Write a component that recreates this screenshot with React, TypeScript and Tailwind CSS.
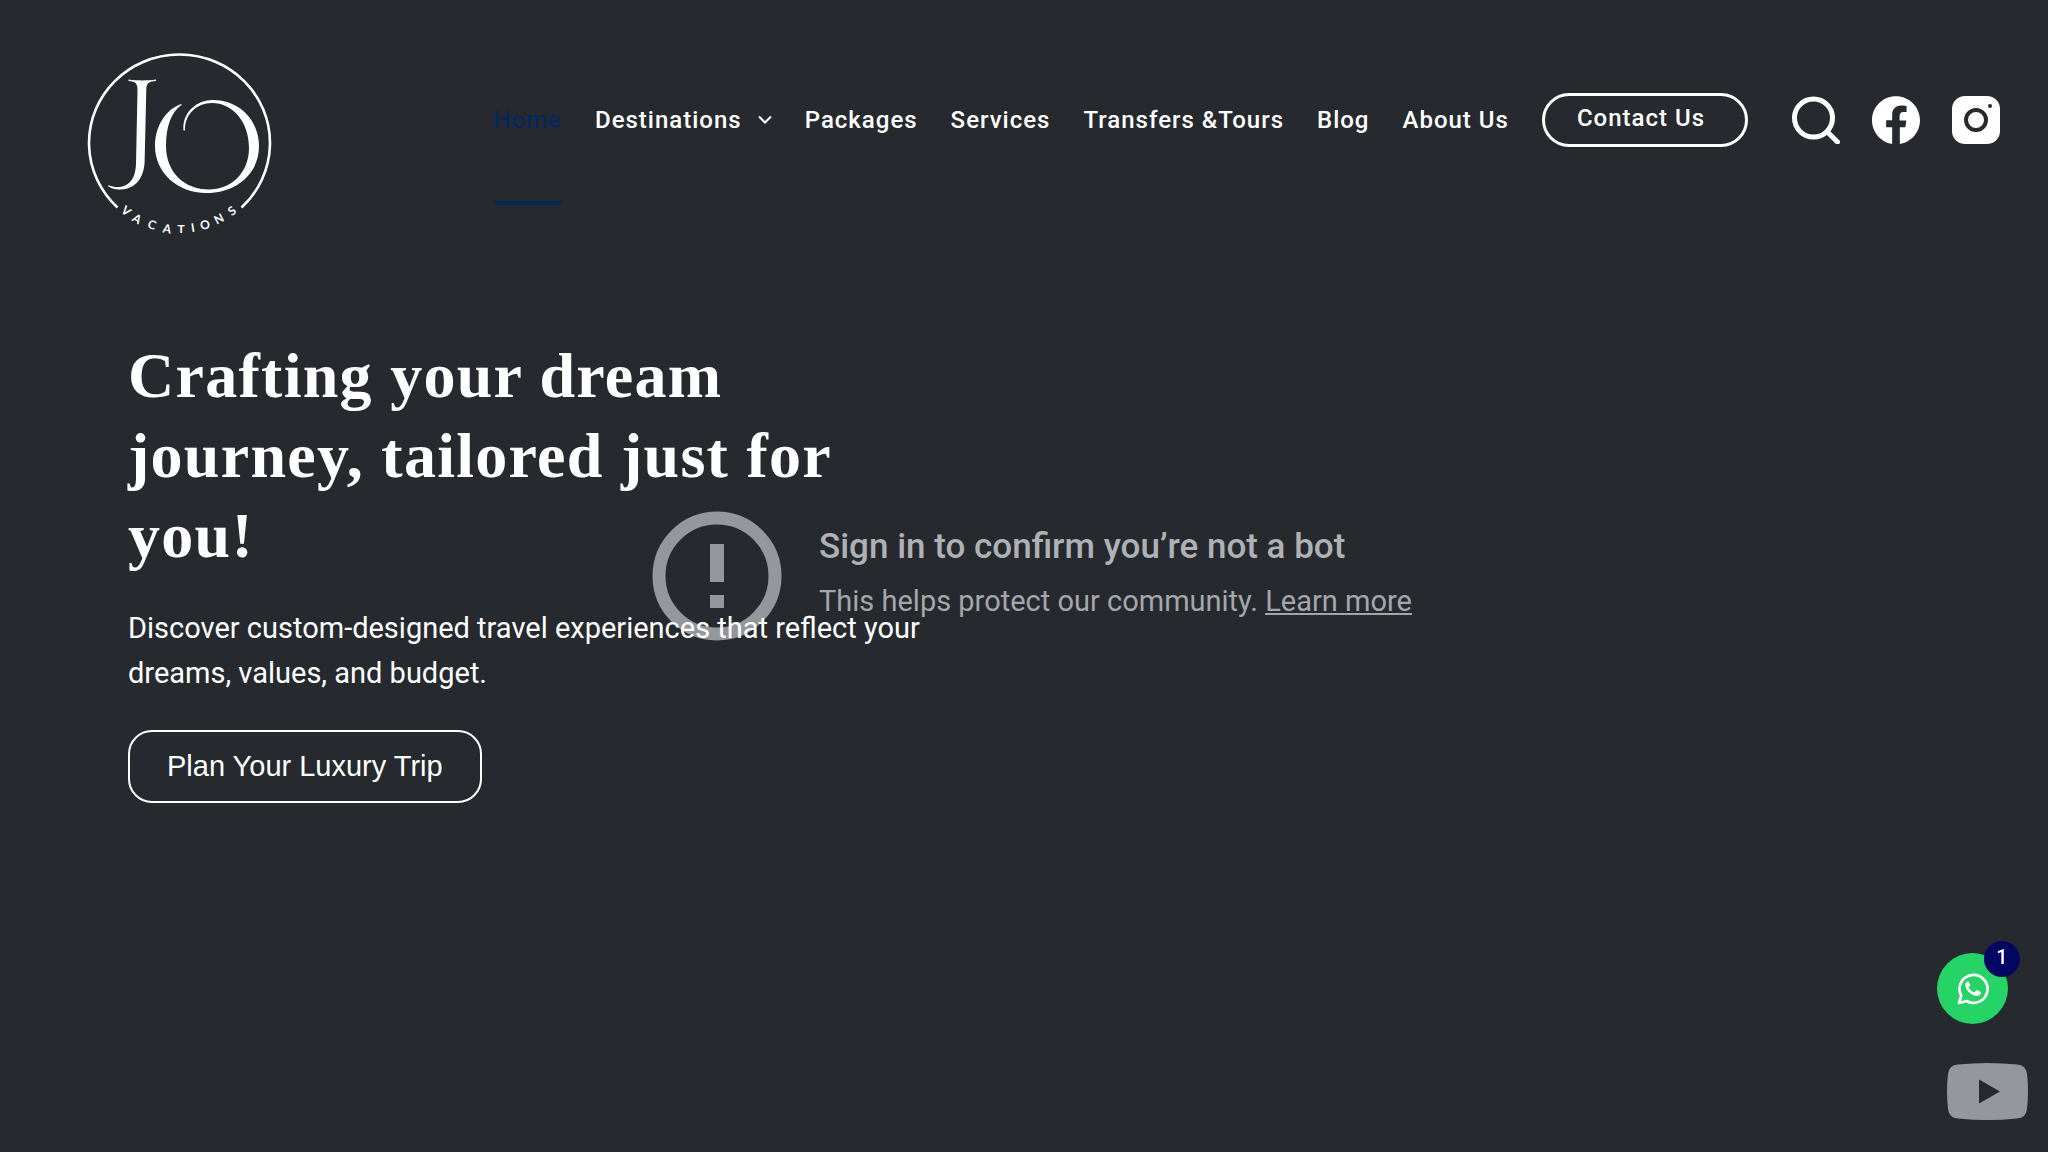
import React from 'react';

const navLinks = [
  { label: 'Home', active: true },
  { label: 'Destinations', menu: true },
  { label: 'Packages' },
  { label: 'Services' },
  { label: 'Transfers &Tours' },
  { label: 'Blog' },
  { label: 'About Us' },
];

// Position and rotation of each letter under the logo ring
const vacations = [
  { char: 'V', x: 56, y: 171, r: 40 },
  { char: 'A', x: 67, y: 179, r: 31 },
  { char: 'C', x: 82, y: 185, r: 21 },
  { char: 'A', x: 97, y: 189, r: 10 },
  { char: 'T', x: 111, y: 189, r: 0 },
  { char: 'I', x: 123, y: 188, r: -9 },
  { char: 'O', x: 135, y: 185, r: -16 },
  { char: 'N', x: 149, y: 179, r: -27 },
  { char: 'S', x: 162, y: 171, r: -36 },
];

function Logo() {
  return (
    <svg viewBox="0 0 220 210" className="w-[220px] h-[210px]" fill="#fff" role="img" aria-label="JO Vacations">
      <path d="M47.500 167.500A90.500 88.500 0 1 1 171.500 167.500" fill="none" stroke="#fff" strokeWidth="2.6" />
      <path d="M58.500 39.500C67 40.700 78 40.700 86 39.500V41C79 41.500 76.500 43 76.300 49L74.600 122C74 137 66 149 51 149.500C45 149.700 40 148 38 146L38.600 145.300C44 147.500 50 147.800 55 145.500C63 142 65.500 134 66 124L67.500 50C67.500 43 65 41.400 58.500 41Z" />
      <path d="M111.500 64C96 69 85 86 85 106C85 133 108 153 136 153C166 153 189 134 189 106C189 80 169 60 143 60C126 60 112 73 113.500 90.500H115C114.500 75 126 63 142 63C163 63 179 82 179 108C179 133 161 149.500 139 149.500C114 149.500 96 132 96 106C96 87 101 72 111.500 65Z" />
      <g fontFamily="Lato, sans-serif" fontSize="12" fontWeight="700" textAnchor="middle">
        {vacations.map((l, i) => (
          <text key={i} x={l.x} y={l.y} dy="4" transform={`rotate(${l.r} ${l.x} ${l.y})`}>
            {l.char}
          </text>
        ))}
      </g>
    </svg>
  );
}

function Header() {
  return (
    <header className="flex justify-between pl-[70px] pr-12 pt-10">
      <a href="#" className="shrink-0">
        <Logo />
      </a>
      <div className="flex h-40 items-center">
        <nav className="flex items-center gap-[33px] text-2xl font-medium tracking-[1px]">
          {navLinks.map((link) => (
            <a
              key={link.label}
              href="#"
              className={
                link.active
                  ? 'relative whitespace-nowrap text-[#08265c]'
                  : 'flex items-center whitespace-nowrap'
              }
            >
              {link.label}
              {link.active && <span className="absolute inset-x-0 top-[97px] h-1 bg-[#06275a]" />}
              {link.menu && (
                <svg viewBox="0 0 14 10" className="ml-4 h-[10px] w-[14px]" fill="none" stroke="#fff" strokeWidth="2">
                  <path d="M1 1.500L7 7.500L13 1.500" />
                </svg>
              )}
            </a>
          ))}
          <a
            href="#"
            className="flex h-[54px] items-center whitespace-nowrap rounded-full border-3 border-white pb-1 pl-8 pr-10"
          >
            Contact Us
          </a>
        </nav>
        <div className="ml-11 flex items-center gap-8">
          <button type="button" aria-label="Search">
            <svg viewBox="0 0 48 48" className="size-12" fill="none" stroke="#fff">
              <circle cx="21.500" cy="22" r="19" strokeWidth="5" />
              <path d="M35.500 36L45.500 46" strokeWidth="5" strokeLinecap="round" />
            </svg>
          </button>
          <a href="#" aria-label="Facebook">
            <svg viewBox="0 0 20 20" className="size-12" fill="#fff">
              <path d="M20,10.100c0-5.500-4.500-10-10-10S0,4.500,0,10.100c0,5,3.700,9.100,8.400,9.900v-7H5.900v-2.900h2.500V7.900C8.400,5.400,9.900,4,12.200,4c1.100,0,2.200,0.200,2.200,0.200v2.500h-1.300c-1.200,0-1.600,0.800-1.600,1.600v1.900h2.800L13.900,13h-2.300v7C16.300,19.200,20,15.100,20,10.100z" />
            </svg>
          </a>
          <a href="#" aria-label="Instagram">
            <svg viewBox="0 0 48 48" className="size-12">
              <rect width="48" height="48" rx="13" fill="#fff" />
              <circle cx="24" cy="24" r="10" fill="none" stroke="#262a2f" strokeWidth="4" />
              <circle cx="38" cy="10" r="2" fill="#262a2f" />
            </svg>
          </a>
        </div>
      </div>
    </header>
  );
}

function VideoNotice() {
  return (
    <div className="absolute inset-0 flex items-center pl-[652px] text-[#afb2b5]">
      <svg viewBox="0 0 130 130" className="size-[130px] shrink-0" fill="#94989d">
        <circle cx="65" cy="65" r="58" fill="none" stroke="#94989d" strokeWidth="13" />
        <path d="M58 33h14v38H58zM58 84h14v13H58z" />
      </svg>
      <div className="ml-[37px] pb-1">
        <p className="text-[35px] font-medium leading-[54px]">Sign in to confirm you’re not a bot</p>
        <p className="text-[29px] leading-[54px] text-[#a4a7ab]">
          This helps protect our community.{' '}
          <a href="#" className="underline">
            Learn more
          </a>
        </p>
      </div>
    </div>
  );
}

function Hero() {
  return (
    <main className="relative px-32 pt-[86px]">
      <h1 className="max-w-[800px] font-['Liberation_Serif',serif] text-[64px] font-bold leading-[80px] tracking-[0.02em]">
        Crafting your dream journey, tailored just for you!
      </h1>
      <p className="mt-[30px] max-w-[800px] text-[29px] leading-[45px]">
        Discover custom-designed travel experiences that reflect your dreams, values, and budget.
      </p>
      <button
        type="button"
        className="mt-[34px] h-[73px] rounded-3xl border-2 border-white px-[37px] font-['Liberation_Sans',sans-serif] text-[29px]"
      >
        Plan Your Luxury Trip
      </button>
    </main>
  );
}

function ChatButton() {
  return (
    <button
      type="button"
      aria-label="Chat on WhatsApp"
      className="fixed bottom-32 right-10 flex size-[71px] items-center justify-center rounded-full bg-[#25d366]"
    >
      <svg viewBox="0 0 32 32" className="size-8" fill="none">
        <path
          d="M2 30L4.200 22.500A14 14 0 1 1 9.500 28Z"
          stroke="#fff"
          strokeWidth="2.700"
          strokeLinejoin="round"
        />
        <path
          d="M11 8.500c-1.500 0-2.700 1.500-2.700 3.300 0 5.500 6.700 11.200 11.500 11.200 2.300 0 4.200-1.500 4.200-3.300 0-.5-.2-.7-.6-.9l-3.200-1.600c-.6-.3-1-.2-1.300.2l-1.300 1.600c-.3.300-.6.400-1 .2-2-.9-3.700-2.400-4.700-4.300-.2-.4-.1-.7.200-1l.9-1.100c.3-.4.3-.7.100-1.100L11.800 9c-.2-.4-.4-.5-.8-.5Z"
          fill="#fff"
        />
      </svg>
      <span className="absolute -right-3 -top-3 flex size-9 items-center justify-center rounded-full bg-[#030763] pb-1 text-xl font-medium">
        1
      </span>
    </button>
  );
}

export default function App() {
  return (
    <div className="relative min-h-screen overflow-hidden bg-[#262a2f] font-[Roboto,sans-serif] text-white">
      <VideoNotice />
      <div className="relative">
        <Header />
        <Hero />
      </div>
      <ChatButton />
      <a href="#" aria-label="YouTube" className="fixed bottom-8 right-5">
        <svg viewBox="0 0 81 57" className="h-[57px] w-[81px]">
          <path d="M11 1.500Q40 -1.500 70 1.500Q79 2 80 11Q82 28 80 46Q79 55 70 55.500Q40 58.500 11 55.500Q2 55 1 46Q-1 28 1 11Q2 2 11 1.500Z" fill="#94989d" />
          <path d="M32 16.500L53 28.500L32 40.500Z" fill="#262a2f" />
        </svg>
      </a>
    </div>
  );
}
